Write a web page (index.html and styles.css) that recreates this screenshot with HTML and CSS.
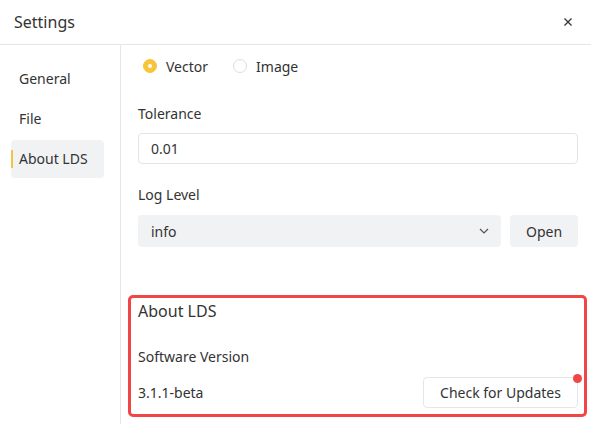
FILE: index.html
```html
<!DOCTYPE html>
<html>
<head>
<meta charset="utf-8">
<link rel="stylesheet" href="styles.css">
</head>
<body>
<div class="dialog">
  <div class="header">
    <span class="title">Settings</span>
    <svg class="close" width="10" height="10" viewBox="0 0 10 10"><path d="M1.5 1.5L8.5 8.5M8.5 1.5L1.5 8.5" stroke="#333" stroke-width="1.3" fill="none"/></svg>
  </div>
  <div class="main">
    <nav class="sidebar">
      <div class="nav-item">General</div>
      <div class="nav-item">File</div>
      <div class="nav-item active"><span class="bar"></span>About LDS</div>
    </nav>
    <div class="content">
      <div class="radios">
        <label class="radio"><span class="dot checked"></span>Vector</label>
        <label class="radio"><span class="dot"></span>Image</label>
      </div>
      <div class="label tol">Tolerance</div>
      <div class="input">0.01</div>
      <div class="label log">Log Level</div>
      <div class="row">
        <div class="select">info
          <svg width="10" height="6" viewBox="0 0 10 6"><path d="M1 1L5 5L9 1" stroke="#555" stroke-width="1.2" fill="none"/></svg>
        </div>
        <div class="btn-grey">Open</div>
      </div>
      <section class="about">
        <div class="about-title">About LDS</div>
        <div class="label sv">Software Version</div>
        <div class="version-row">
          <span>3.1.1-beta</span>
          <div class="btn-outline">Check for Updates<span class="badge"></span></div>
        </div>
      </section>
    </div>
  </div>
</div>
</body>
</html>
```
FILE: styles.css
```css
* { box-sizing: border-box; }
html, body { margin: 0; padding: 0; }
body {
  width: 591px;
  height: 424px;
  background: #fff;
  font-family: "Noto Sans", "Open Sans", sans-serif;
  font-size: 14px;
  color: #333;
  overflow: hidden;
}
.dialog { width: 591px; height: 424px; display: flex; flex-direction: column; }
.header {
  height: 45px;
  border-bottom: 1px solid #e6e6e6;
  display: flex;
  align-items: center;
  justify-content: space-between;
  padding: 0 18px 0 14px;
}
.title { font-size: 16px; color: #333; }
.close { display: block; }
.main { flex: 1; display: flex; }
.sidebar {
  width: 121px;
  border-right: 1px solid #e6e6e6;
  padding: 15px 0 0 11px;
}
.nav-item {
  width: 93px;
  height: 38px;
  margin-bottom: 2px;
  display: flex;
  align-items: center;
  padding-left: 8px;
  border-radius: 4px;
  line-height: 22px;
}
.nav-item.active { background: #f1f2f4; padding-left: 0; }
.bar { width: 2px; height: 18px; background: #f5c243; margin-right: 6px; }
.content { flex: 1; padding: 0 13px 0 17px; }
.radios { display: flex; align-items: center; height: 22px; margin-top: 10px; padding-left: 5px; }
.radio { display: flex; align-items: center; margin-right: 25px; }
.dot {
  width: 14px; height: 14px; border-radius: 50%;
  border: 1.5px solid #dcdde1; margin-right: 9px; background: #fff;
  display: flex; align-items: center; justify-content: center;
}
.dot.checked { background: #f8c43a; border-color: #f8c43a; }
.dot.checked::after { content: ""; width: 4px; height: 4px; border-radius: 50%; background: #fff; }
.label { line-height: 22px; }
.label.tol { margin-top: 26px; margin-bottom: 8px; }
.label.log { margin-top: 20px; margin-bottom: 9px; }
.input {
  height: 31px;
  border: 1px solid #e3e4e7;
  border-radius: 4px;
  padding-left: 12px;
  display: flex; align-items: center;
}
.row { display: flex; gap: 9px; }
.select {
  flex: 1; height: 32px; background: #f1f2f4; border-radius: 4px;
  display: flex; align-items: center; justify-content: space-between;
  padding: 0 12px 0 13px;
}
.btn-grey {
  width: 68px; height: 32px; background: #f1f2f4; border-radius: 4px;
  display: flex; align-items: center; justify-content: center;
}
.about {
  margin: 48px -9px 0 -10px;
  border: 3px solid #f04646;
  border-radius: 5px;
  padding: 2px 6px 6px 7px;
}
.about-title { font-size: 16px; line-height: 22px; }
.label.sv { margin-top: 24px; margin-bottom: 9px; }
.version-row { display: flex; align-items: center; justify-content: space-between; }
.btn-outline {
  position: relative;
  width: 155px; height: 31px;
  border: 1px solid #e5e6e9; border-radius: 4px;
  display: flex; align-items: center; justify-content: center;
}
.badge {
  position: absolute; top: -4px; right: -5px;
  width: 9px; height: 9px; border-radius: 50%; background: #f04646;
}
```
